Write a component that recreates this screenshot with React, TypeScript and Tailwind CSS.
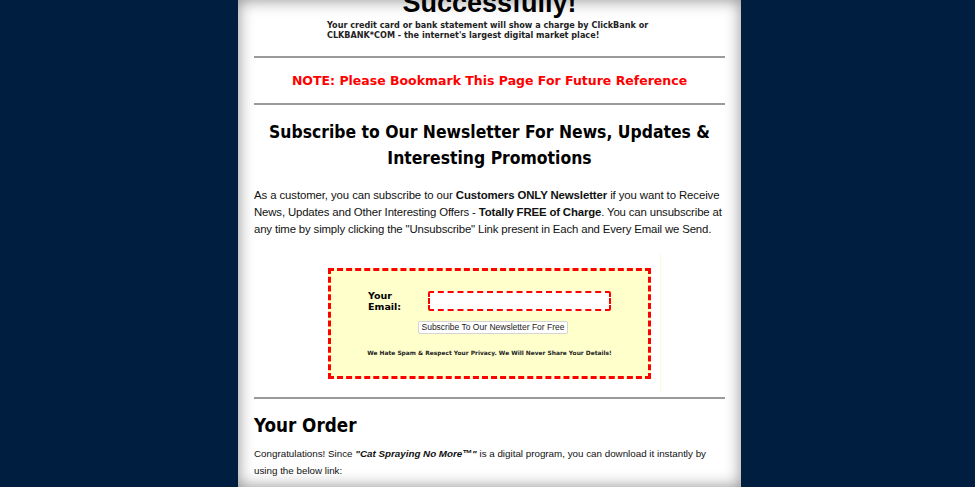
export default function App() {
  return (
    <div className="h-[487px] w-full bg-[#001e3f] flex justify-center pl-[4px] overflow-hidden">
      <div className="w-[503px] bg-white shadow-[inset_0_0_16px_rgba(0,0,0,0.45)] px-4 pb-10">
        {/* top heading, cut off by the viewport */}
        <div className="h-[20px] overflow-hidden relative">
          <h1 className="absolute left-0 right-0 bottom-[2px] text-center text-[27px] leading-[30px] font-bold text-black font-['Liberation_Sans',Arial,sans-serif]">
            Successfully!
          </h1>
        </div>
        <p className="ml-[73px] text-[8.1px] leading-[10px] font-bold text-[#222] font-['DejaVu_Sans',Verdana,sans-serif]">
          Your credit card or bank statement will show a charge by ClickBank or
          <br />
          CLKBANK*COM - the internet's largest digital market place!
        </p>

        <hr className="mt-[16px] border-0 h-[2px] bg-[#9a9a9a]" />
        <p className="mt-[14px] text-center text-[12.5px] leading-[18px] font-bold text-[#ff0000] font-['DejaVu_Sans',Verdana,sans-serif]">
          NOTE: Please Bookmark This Page For Future Reference
        </p>
        <hr className="mt-[13px] border-0 h-[2px] bg-[#9a9a9a]" />

        <h2 className="mt-[14px] text-center text-[17.4px] leading-[26px] font-bold text-black whitespace-nowrap font-['DejaVu_Sans_Condensed','DejaVu_Sans',Tahoma,sans-serif]">
          Subscribe to Our Newsletter For News, Updates &amp;
          <br />
          Interesting Promotions
        </h2>

        <div className="mt-[16px] text-[11.4px] leading-[17px] text-[#111] whitespace-nowrap font-['Liberation_Sans',Arial,sans-serif]">
          <p className="tracking-[-0.1px]">
            As a customer, you can subscribe to our <b>Customers ONLY Newsletter</b> if you want to Receive
          </p>
          <p className="tracking-[-0.15px]">
            News, Updates and Other Interesting Offers - <b>Totally FREE of Charge</b>. You can unsubscribe at
          </p>
          <p className="tracking-[-0.15px]">
            any time by simply clicking the "Unsubscribe" Link present in Each and Every Email we Send.
          </p>
        </div>

        <div className="mt-[16px] ml-[66px] w-[341px] h-[138px] border-r border-[#fdf9dc] flex items-center">
          <div className="ml-[8px] w-[323px] h-[111px] border-[3px] border-dashed border-[#ff0000] bg-[#ffffcc] flex flex-col items-center">
            <div className="mt-[19px] flex items-center">
              <div className="w-[60px] text-[9.5px] leading-[11px] font-bold text-black font-['DejaVu_Sans',Verdana,sans-serif]">
                Your
                <br />
                Email:
              </div>
              <div className="w-[183px] h-[20px] border-2 border-dashed border-[#ff0000] rounded-[2px] bg-white" />
            </div>
            <button className="mt-[9px] ml-[7px] px-[3px] h-[13px] bg-white border border-[#d4d4d4] rounded-[2px] text-[8.5px] leading-[11px] text-[#222] font-['Liberation_Sans',Arial,sans-serif]">
              Subscribe To Our Newsletter For Free
            </button>
            <p className="mt-[15px] text-[5.9px] leading-[8px] font-bold text-[#222] font-['DejaVu_Sans',Verdana,sans-serif]">
              We Hate Spam &amp; Respect Your Privacy. We Will Never Share Your Details!
            </p>
          </div>
        </div>

        <hr className="mt-[5px] border-0 h-[2px] bg-[#9a9a9a]" />
        <h2 className="mt-[14px] text-[18.7px] leading-[26px] font-bold text-black font-['DejaVu_Sans_Condensed','DejaVu_Sans',Verdana,sans-serif]">
          Your Order
        </h2>
        <p className="mt-[6px] text-[9.8px] leading-[17px] text-[#111] font-['Liberation_Sans',Arial,sans-serif]">
          Congratulations! Since <b><i>"Cat Spraying No More™"</i></b> is a digital program, you can download it instantly by
          <br />
          using the below link:
        </p>
      </div>
    </div>
  );
}
